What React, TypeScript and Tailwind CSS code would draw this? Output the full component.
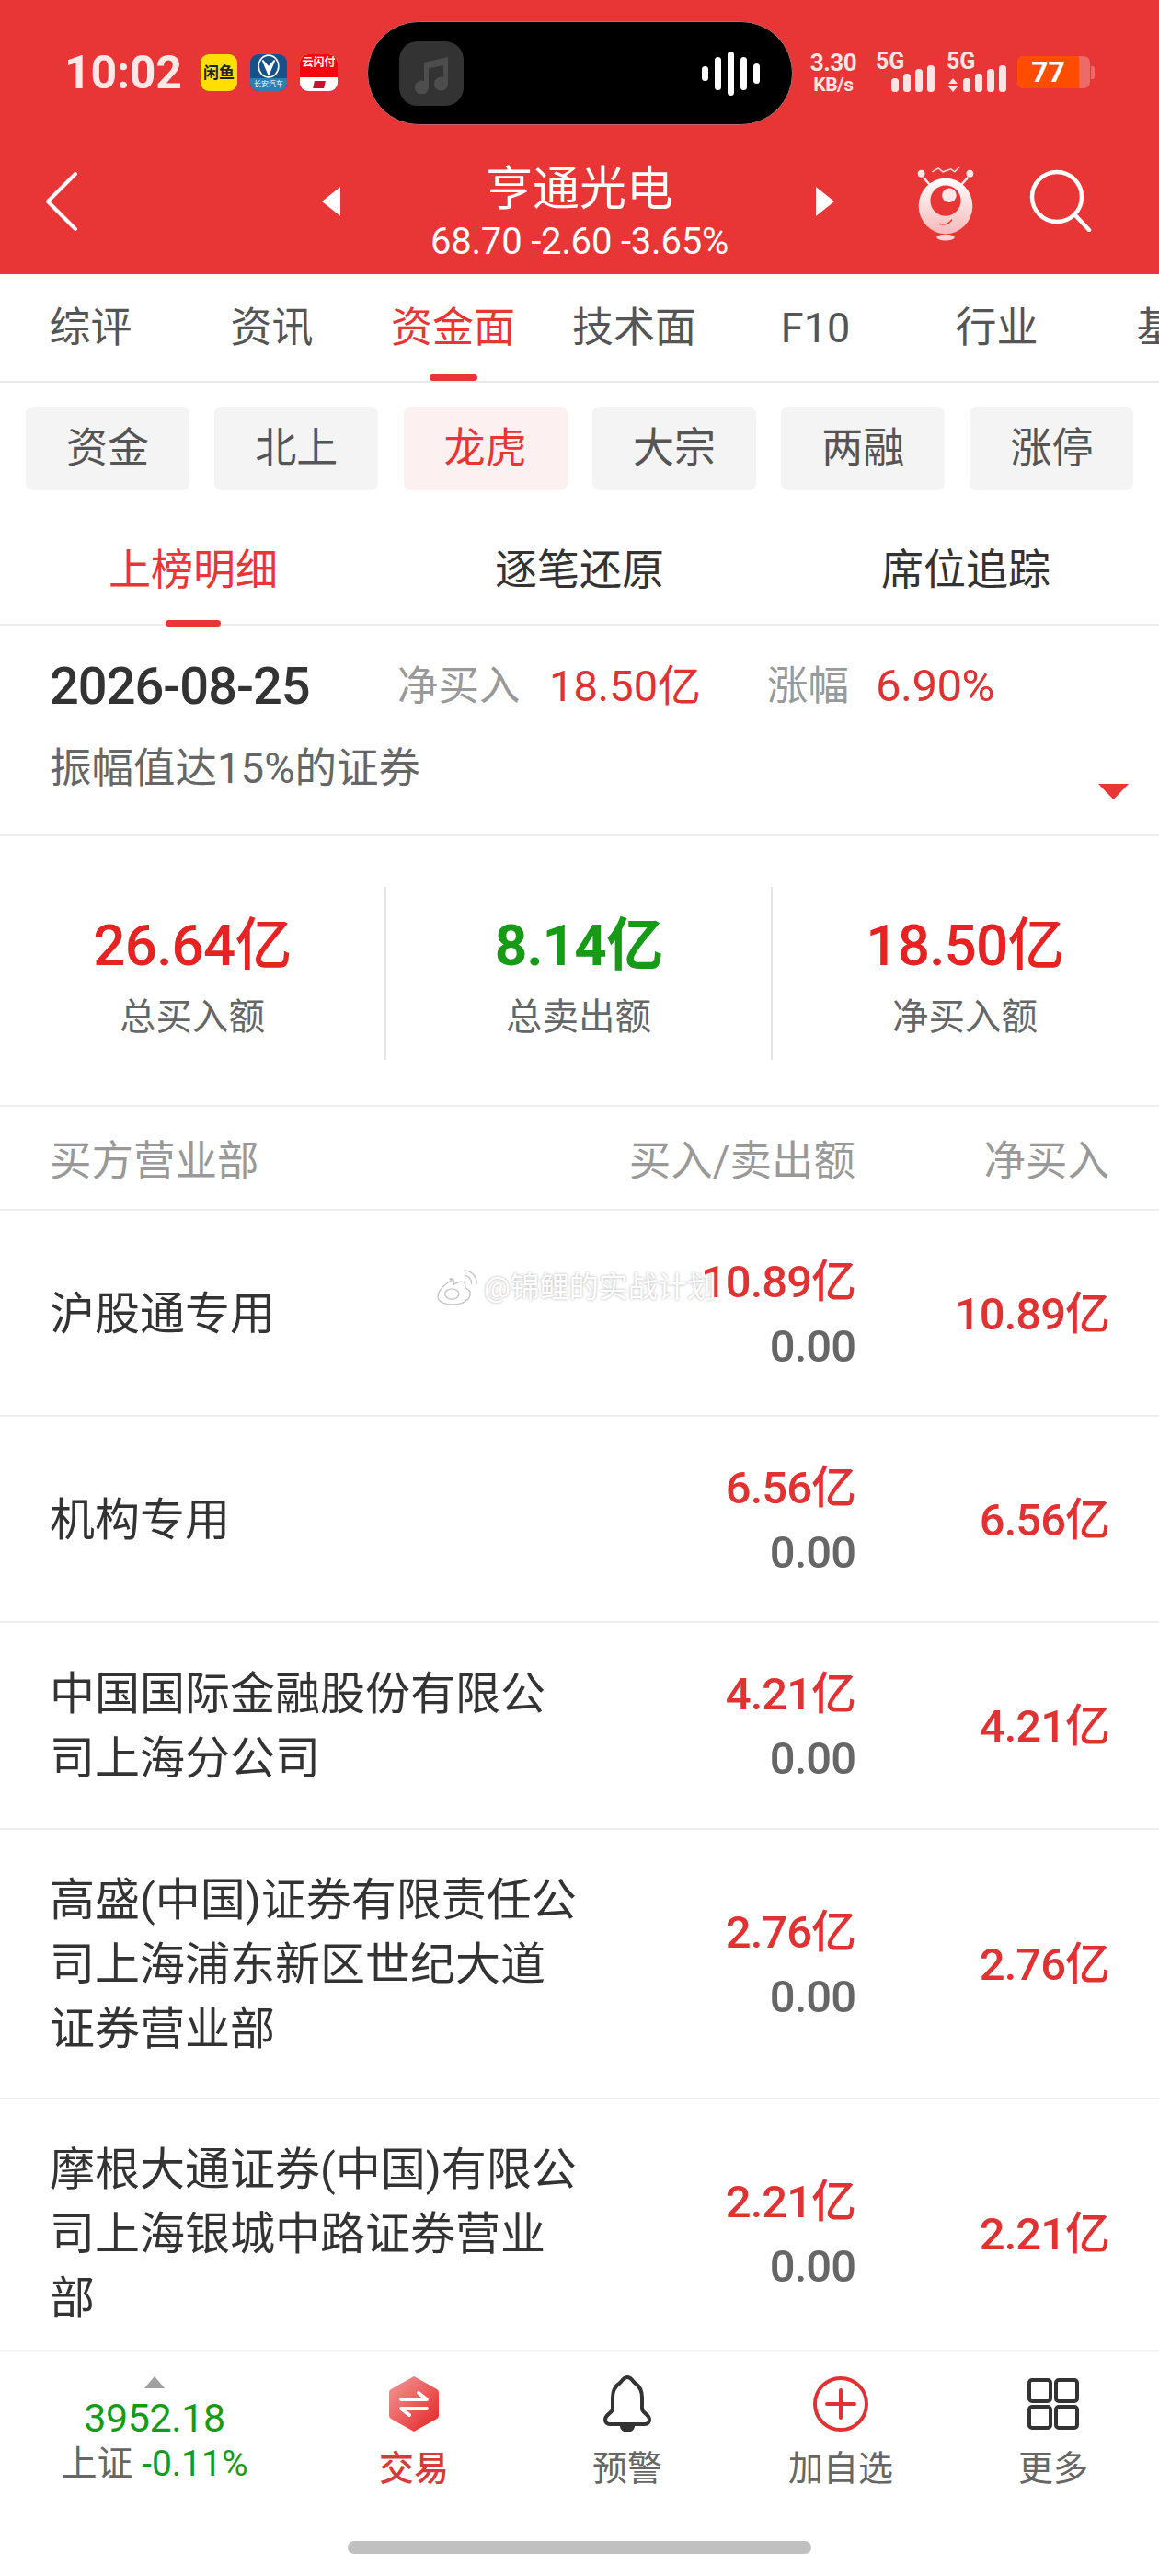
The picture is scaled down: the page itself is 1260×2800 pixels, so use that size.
const F = "font-['Roboto','Noto_Sans_CJK_SC',sans-serif]";

function Signal({ className }: { className: string }) {
  return (
    <svg className={className} width="47" height="29" viewBox="0 0 47 29" fill="#fbe4e4">
      <rect x="0" y="14" width="8" height="15" rx="3.5" />
      <rect x="13" y="9" width="8" height="20" rx="3.5" />
      <rect x="26" y="4" width="8" height="25" rx="3.5" />
      <rect x="39" y="0" width="8" height="29" rx="3.5" />
    </svg>
  );
}

function StatusBar() {
  return (
    <div className="relative h-[154px] pt-[54px] flex items-start">
      <div className="ml-[70px] text-[50px] leading-[50px] font-bold text-[#fde8e8] w-[126px] tracking-[-0.2px]">10:02</div>
      <div className="ml-[22px] mt-[5px] flex gap-[14px]">
        <div className="w-[40px] h-[40px] rounded-[9px] bg-[#ffdf00] flex items-center justify-center text-[17px] leading-[17px] text-[#222] font-bold">闲鱼</div>
        <div className="w-[40px] h-[40px] rounded-[9px] bg-[#17518a] flex flex-col items-center overflow-hidden">
          <svg width="26" height="26" viewBox="0 0 24 24" fill="none" stroke="#fff" strokeWidth="1.5"><ellipse cx="12" cy="12" rx="10" ry="11" /><path d="M6 6l6 14 6-14-6 7z" fill="#fff" /></svg>
          <div className="w-full flex-1 bg-[#2c7fb0] text-[8px] leading-[14px] text-white text-center">长安汽车</div>
        </div>
        <div className="w-[41px] h-[40px] rounded-[9px] overflow-hidden flex flex-col bg-white">
          <div className="h-[25px] bg-[#f5060f] text-[12px] leading-[18px] text-white text-center font-bold">云闪付</div>
          <div className="flex-1 flex items-center justify-center"><div className="w-[12px] h-[8px] bg-[#c8122e] -skew-x-12" /></div>
        </div>
      </div>
      <div className="absolute left-[399px] top-[23px] w-[463px] h-[113px] rounded-[57px] bg-black border border-[#b96a6a] flex items-center">
        <div className="ml-[34px] w-[70px] h-[70px] rounded-[20px] bg-[#333333] flex items-center justify-center">
          <svg width="44" height="44" viewBox="0 0 44 44" fill="#4d4d4d"><path d="M14 10l26-6v29a7.500 7.500 0 1 1-5-7V13l-16 3.500V37a7.500 7.500 0 1 1-5-7z" /></svg>
        </div>
        <svg className="ml-[259px]" width="63" height="48" viewBox="0 0 63 48" fill="#fff">
          <rect x="0" y="16" width="7" height="16" rx="3.5" />
          <rect x="14" y="6" width="7" height="36" rx="3.5" />
          <rect x="28" y="0" width="7" height="48" rx="3.5" />
          <rect x="42" y="6" width="7" height="36" rx="3.5" />
          <rect x="56" y="13" width="7" height="22" rx="3.5" />
        </svg>
      </div>
      <div className="absolute left-[878px] top-[55px] w-[56px] text-[#fbe4e4] font-bold text-center">
        <div className="text-[26px] leading-[26px] tracking-[-0.5px]">3.30</div>
        <div className="text-[21px] leading-[22px] tracking-[-0.5px]">KB/s</div>
      </div>
      <div className="absolute left-[952px] top-[55px] text-[25px] leading-[24px] text-[#fbe4e4] font-bold">5G</div>
      <Signal className="absolute left-[969px] top-[71px]" />
      <div className="absolute left-[1029px] top-[55px] text-[25px] leading-[24px] text-[#fbe4e4] font-bold">5G</div>
      <svg className="absolute left-[1031px] top-[85px]" width="10" height="15" viewBox="0 0 10 15" fill="#fbe4e4"><path d="M5 0l5 6H0zM5 15l5-6H0z" /></svg>
      <Signal className="absolute left-[1047px] top-[71px]" />
      <div className="absolute left-[1106px] top-[61px] w-[79px] h-[35px] rounded-[7px] bg-[#ec6a68]">
        <div className="w-[67px] h-full rounded-l-[7px] bg-[#ff4d00] text-white font-bold text-[32px] leading-[35px] text-center">77</div>
      </div>
      <div className="absolute left-[1186px] top-[72px] w-[4px] h-[14px] rounded-r-[2px] bg-[#ec6a68]" />
    </div>
  );
}

function TitleBar() {
  return (
    <div className="h-[144px] relative flex justify-center text-white">
      <div className="flex flex-col items-center">
        <div className="text-[51px] leading-[60px] mt-[22px] h-[60px]">亨通光电</div>
        <div className="text-[40px] leading-[44px] mt-[5px] tracking-[-0.2px]">68.70 -2.60 -3.65%</div>
      </div>
      <svg className="absolute left-[49px] top-[32px]" width="36" height="66" viewBox="0 0 36 66" fill="none" stroke="#fff" strokeWidth="4" strokeLinecap="round" strokeLinejoin="round"><path d="M33 3L3 33l30 30" /></svg>
      <svg className="absolute left-[349px] top-[47px]" width="22" height="36" viewBox="0 0 22 36" fill="#fff"><path d="M21 2L1 18l20 16z" /></svg>
      <svg className="absolute left-[886px] top-[47px]" width="22" height="36" viewBox="0 0 22 36" fill="#fff"><path d="M1 2l20 16L1 34z" /></svg>
      <svg className="absolute left-[993px] top-[25px]" width="70" height="84" viewBox="0 0 70 86">
        <defs><linearGradient id="eg" x1="0" y1="0" x2="0" y2="1"><stop offset="0" stopColor="#fff" /><stop offset="1" stopColor="#f6b9b9" /></linearGradient></defs>
        <path d="M20 8l7-4 5 4 9-3 4 3 6-6" fill="none" stroke="#fbdcdc" strokeWidth="1.5" />
        <circle cx="8" cy="10" r="4" fill="#fde8e8" /><circle cx="62" cy="10" r="4" fill="#fde8e8" />
        <path d="M10 14l9 10M60 14l-9 10" stroke="#fde8e8" strokeWidth="2.500" />
        <ellipse cx="35" cy="46" rx="30" ry="31" fill="url(#eg)" />
        <circle cx="35" cy="40" r="17" fill="#e83535" />
        <circle cx="39" cy="34" r="8" fill="#fde8e8" />
        <path d="M28 66q10 2 14-5" fill="none" stroke="#e83535" strokeWidth="1.500" />
        <ellipse cx="35" cy="81" rx="10" ry="3.500" fill="#fbd5d5" />
      </svg>
      <svg className="absolute left-[1119px] top-[30px]" width="68" height="68" viewBox="0 0 68 68" fill="none" stroke="#fff" strokeWidth="4.500" strokeLinecap="round"><circle cx="30" cy="30" r="27" /><path d="M50 50l15 16" /></svg>
    </div>
  );
}

function MainTabs() {
  const tabs = ["综评", "资讯", "资金面", "技术面", "F10", "行业", "基金"];
  return (
    <div className="h-[118px] border-b-[2px] border-[#e9e9e9] flex overflow-hidden">
      {tabs.map((t, i) => (
        <div key={t} className={`relative shrink-0 w-[197px] pt-[29px] text-center text-[45px] leading-[60px] ${i === 2 ? "text-[#e83535]" : "text-[#555]"}`}>
          {t}
          {i === 2 && <div className="absolute left-[73px] top-[109px] w-[52px] h-[7px] rounded-[4px] bg-[#e83535]" />}
        </div>
      ))}
    </div>
  );
}

function Chips() {
  const chips = ["资金", "北上", "龙虎", "大宗", "两融", "涨停"];
  return (
    <div className="flex gap-[27.3px] pl-[28px] pt-[26px] h-[125px]">
      {chips.map((c, i) => (
        <div key={c} className={`w-[178px] h-[91px] rounded-[8px] flex items-center justify-center text-[45px] ${i === 2 ? "bg-[#fdf0f0] text-[#e83535]" : "bg-[#f4f4f4] text-[#555]"}`}>{c}</div>
      ))}
    </div>
  );
}

function SubTabs() {
  const tabs = ["上榜明细", "逐笔还原", "席位追踪"];
  return (
    <div className="relative h-[139px] border-b-[2px] border-[#eeeeee] grid grid-cols-3">
      {tabs.map((t, i) => (
        <div key={t} className={`text-center pt-[48px] text-[46px] leading-[60px] ${i === 0 ? "text-[#e83535]" : "text-[#333]"}`}>{t}</div>
      ))}
      <div className="absolute left-[180px] top-[133px] w-[60px] h-[7px] rounded-[4px] bg-[#e83535]" />
    </div>
  );
}

function Info() {
  return (
    <div className="h-[229px] border-b-[2px] border-[#eeeeee] relative pl-[54px] pt-[36px]">
      <div className="flex items-center h-[60px]">
        <span className="text-[56px] text-[#333] w-[378px] tracking-[-1px] font-medium">2026-08-25</span>
        <span className="text-[44.5px] text-[#999] w-[165px]">净买入</span>
        <span className="text-[47px] text-[#e03232] w-[237px]">18.50亿</span>
        <span className="text-[44.5px] text-[#999] w-[118px]">涨幅</span>
        <span className="text-[49px] tracking-[-0.5px] text-[#e03232]">6.90%</span>
      </div>
      <div className="text-[45.5px] leading-[56px] text-[#666] mt-[32px]">振幅值达15%的证券</div>
      <svg className="absolute left-[1194px] top-[172px]" width="33" height="17" viewBox="0 0 33 17" fill="#e83535"><path d="M0 0h33L16.500 17z" /></svg>
    </div>
  );
}

function Stats() {
  const items = [
    ["26.64亿", "总买入额", "text-[#e62222] font-medium", "w-[418px]"],
    ["8.14亿", "总卖出额", "text-[#179b17] font-bold", "w-[420px]"],
    ["18.50亿", "净买入额", "text-[#e62222] font-medium", "w-[420px]"],
  ];
  return (
    <div className="h-[294px] border-b-[2px] border-[#eeeeee] flex items-center pt-[6px]">
      {items.map(([a, b, c, w], i) => (
        <div key={a} className={`${w} h-[188px] flex flex-col items-center pt-[28px] ${i > 0 ? "border-l-[2px] border-[#e6e6e6]" : ""}`}>
          <div className={`text-[62px] leading-[72px] tracking-[-0.8px] ${c}`}>{a}</div>
          <div className="text-[39.500px] leading-[50px] text-[#666] mt-[17px]">{b}</div>
        </div>
      ))}
    </div>
  );
}

function Row({ name, buy, net, h }: { name: string; buy: string; net: string; h: string }) {
  return (
    <div className={`${h} shrink-0 border-b-[2px] border-[#eeeeee] flex items-center pl-[54px] pr-[54px]`}>
      <div className="w-[580px] pt-[3px] text-[49px] leading-[70px] text-[#333]">{name}</div>
      <div className="w-[296px] pt-[3px] text-right text-[49px] leading-[70px] tracking-[-1px] font-medium">
        <div className="text-[#e03232]">{buy}</div>
        <div className="text-[#666]">0.00</div>
      </div>
      <div className="flex-1 pt-[3px] text-right text-[49px] tracking-[-1px] font-medium text-[#e03232]">{net}</div>
    </div>
  );
}

function Table() {
  return (
    <div className="h-[1351px] overflow-hidden flex flex-col">
      <div className="h-[113px] shrink-0 border-b-[2px] border-[#eeeeee] flex items-center pl-[54px] pr-[54px] pt-[10px] text-[45.500px] text-[#999]">
        <div className="w-[580px]">买方营业部</div>
        <div className="w-[296px] text-right whitespace-nowrap">买入/卖出额</div>
        <div className="flex-1 text-right">净买入</div>
      </div>
      <Row name="沪股通专用" buy="10.89亿" net="10.89亿" h="h-[224px]" />
      <Row name="机构专用" buy="6.56亿" net="6.56亿" h="h-[224px]" />
      <Row name="中国国际金融股份有限公司上海分公司" buy="4.21亿" net="4.21亿" h="h-[225px]" />
      <Row name="高盛(中国)证券有限责任公司上海浦东新区世纪大道证券营业部" buy="2.76亿" net="2.76亿" h="h-[293px]" />
      <Row name="摩根大通证券(中国)有限公司上海银城中路证券营业部" buy="2.21亿" net="2.21亿" h="h-[293px]" />
    </div>
  );
}

function BottomBar() {
  return (
    <div className="h-[247px] border-t-[3px] border-[#f3f3f3] relative text-[#666]">
      <div className="absolute left-[0px] top-[26px] w-[336px] flex flex-col items-center">
        <svg width="22" height="13" viewBox="0 0 22 13" fill="#a0a0a0"><path d="M11 0l11 13H0z" /></svg>
        <div className="text-[43px] leading-[50px] tracking-[-0.4px] text-[#179b17] mt-[7px]">3952.18</div>
        <div className="text-[39px] leading-[50px]">上证 <span className="text-[#179b17]">-0.11%</span></div>
      </div>
      <div className="absolute left-[350px] top-[25px] w-[200px] flex flex-col items-center text-[#d63a3a]">
        <svg width="56" height="62" viewBox="0 0 56 62">
          <defs><linearGradient id="hx" x1="0" y1="0" x2="1" y2="1"><stop offset="0" stopColor="#f59a9a" /><stop offset="1" stopColor="#e32222" /></linearGradient></defs>
          <path d="M28 1l25 14a4 4 0 0 1 2 3v26a4 4 0 0 1-2 3L28 61 3 47a4 4 0 0 1-2-3V18a4 4 0 0 1 2-3z" fill="url(#hx)" />
          <path d="M14 26h28l-9-7M42 36H14l9 7" fill="none" stroke="#fff" strokeWidth="4" strokeLinecap="round" strokeLinejoin="round" />
        </svg>
        <div className="text-[38px] leading-[50px] mt-[14px] font-medium">交易</div>
      </div>
      <div className="absolute left-[582px] top-[25px] w-[200px] flex flex-col items-center">
        <svg width="52" height="62" viewBox="0 0 52 62" fill="none" stroke="#333" strokeWidth="4" strokeLinejoin="round"><path d="M26 2c4 0 5 3 8 6 6 4 8 9 8 16v12c0 5 8 6 8 12 0 3-2 5-5 5H7c-3 0-5-2-5-5 0-6 8-7 8-12V24c0-7 2-12 8-16 3-3 4-6 8-6z" /><path d="M18 55h16c0 4-4 7-8 7s-8-3-8-7z" fill="#333" stroke="none" /></svg>
        <div className="text-[38px] leading-[50px] mt-[14px]">预警</div>
      </div>
      <div className="absolute left-[814px] top-[25px] w-[200px] flex flex-col items-center">
        <svg width="62" height="62" viewBox="0 0 62 62" fill="none" stroke="#e03232"><circle cx="31" cy="31" r="28" strokeWidth="4" /><path d="M16 31h30M31 16v30" strokeWidth="4" strokeLinecap="round" /></svg>
        <div className="text-[38px] leading-[50px] mt-[14px]">加自选</div>
      </div>
      <div className="absolute left-[1045px] top-[28px] w-[200px] flex flex-col items-center">
        <svg width="56" height="56" viewBox="0 0 56 56" fill="none" stroke="#333" strokeWidth="4"><rect x="2" y="2" width="23" height="23" rx="3" /><rect x="31" y="2" width="23" height="23" rx="3" /><rect x="2" y="31" width="23" height="23" rx="3" /><rect x="31" y="31" width="23" height="23" rx="3" /></svg>
        <div className="text-[38px] leading-[50px] mt-[17px]">更多</div>
      </div>
      <div className="absolute left-[378px] top-[205px] w-[504px] h-[14px] rounded-[7px] bg-[#c0c0c0]" />
    </div>
  );
}

export default function App() {
  return (
    <div className={`relative w-[1260px] h-[2800px] overflow-hidden bg-white ${F}`}>
      <div className="bg-[#e83535]">
        <StatusBar />
        <TitleBar />
      </div>
      <MainTabs />
      <Chips />
      <SubTabs />
      <Info />
      <Stats />
      <Table />
      <BottomBar />
      <div className="absolute left-[474px] top-[1379px] flex items-center">
        <svg width="46" height="40" viewBox="0 0 48 42" fill="#fff" stroke="#c8c8c8" strokeWidth="1.5"><path d="M20 12c-8 4-18 12-18 20 0 6 8 9 17 9 12 0 20-6 20-13 0-4-4-5-6-6 1-4 0-8-6-7-3 1-5 2-7 3 1-6-1-8-5-6z" /><ellipse cx="18" cy="29" rx="8" ry="6" /><path d="M32 8a8 8 0 0 1 8 10M32 2a14 14 0 0 1 14 16" fill="none" /></svg>
        <span className="text-[32px] leading-[40px] ml-[6px] text-white [text-shadow:0_0_3px_#aaa]">@锦鲤的实战计划</span>
      </div>
    </div>
  );
}
